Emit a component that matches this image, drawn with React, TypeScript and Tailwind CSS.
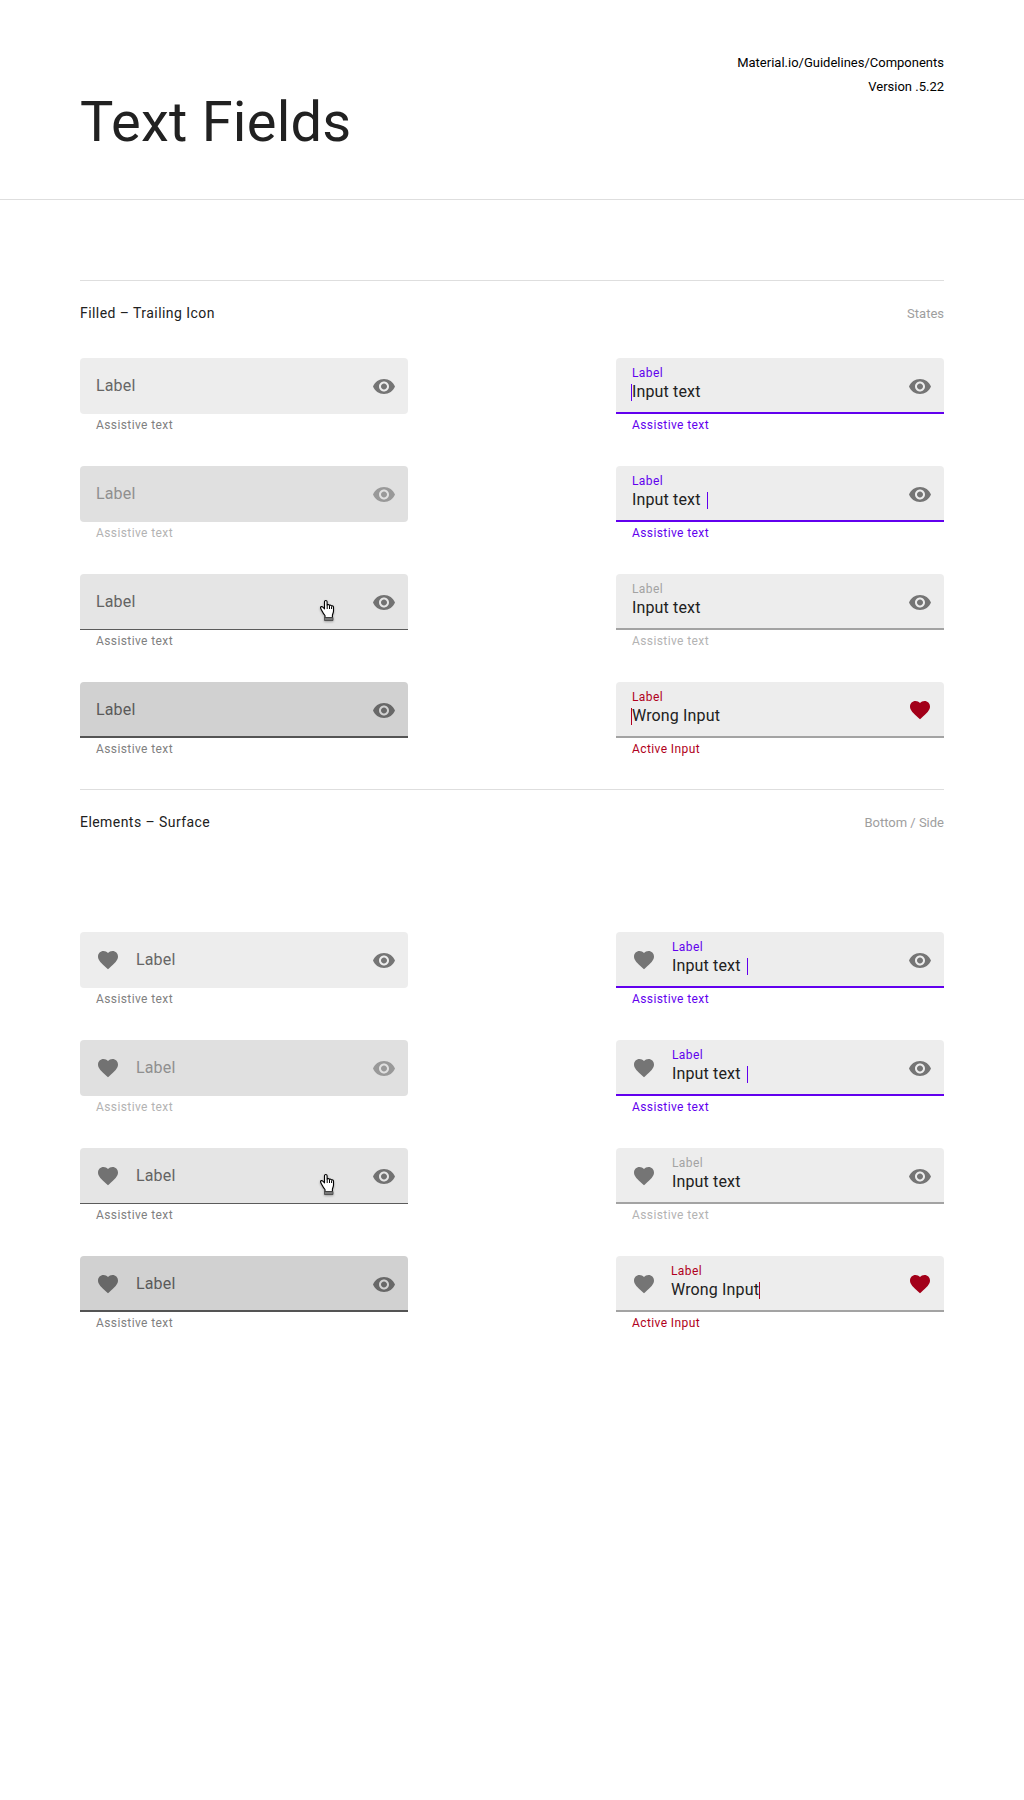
import React from "react";

type Tone = "default" | "disabled" | "hover" | "pressed";
type State = "focused" | "resting" | "error";

function Eye({ className = "" }: { className?: string }) {
  return (
    <svg viewBox="0 -0.5 24 24" className={`size-6 shrink-0 ${className}`} fill="currentColor">
      <path d="M12 4.5C7 4.5 2.73 7.61 1 12c1.73 4.39 6 7.5 11 7.5s9.27-3.11 11-7.5c-1.73-4.39-6-7.5-11-7.5zM12 17c-2.76 0-5-2.24-5-5s2.24-5 5-5 5 2.24 5 5-2.24 5-5 5zm0-8c-1.66 0-3 1.34-3 3s1.34 3 3 3 3-1.34 3-3-1.34-3-3-3z" />
    </svg>
  );
}

function Heart({ className = "" }: { className?: string }) {
  return (
    <svg viewBox="0 0 24 24" className={`size-6 shrink-0 ${className}`} fill="currentColor">
      <path d="M12 21.35l-1.45-1.32C5.4 15.36 2 12.28 2 8.5 2 5.42 4.42 3 7.5 3c1.74 0 3.41.81 4.5 2.09C13.09 3.81 14.76 3 16.5 3 19.58 3 22 5.42 22 8.5c0 3.78-3.4 6.86-8.55 11.54L12 21.35z" />
    </svg>
  );
}

function HandCursor() {
  return (
    <svg viewBox="0 0 16 23" className="absolute left-[239px] top-[25px] h-[23px] w-4 drop-shadow-[0_1px_1px_rgba(0,0,0,0.3)]">
      <path
        d="M6 18.500v-2C5 15.300 3.800 13.500 3.200 12.200 2.500 10.800 1.500 9.800 1.500 8.600c0-1.200 1.500-1.300 2.400-.4l1.600 1.600V2.700c0-1.600 2.500-1.600 2.600 0V6c.5-.7 2.100-.5 2.400.4.6-.5 1.800-.3 2.100.6.800-.3 1.900.1 1.900 1.300V12c0 1.800-.8 2.600-1.100 4.200v2.300z"
        fill="#fff"
        stroke="#000"
        strokeWidth="1.1"
        strokeLinejoin="round"
      />
      <path d="M8.200 6v4M10.500 6.700v3.300M12.600 7.500v2.500" stroke="#000" strokeWidth="1" />
      <path d="M5.500 18.500h8.500v3H5.500z" fill="#777" stroke="#444" strokeWidth=".8" strokeLinejoin="round" />
    </svg>
  );
}

const tones: Record<Tone, { box: string; label: string; eye: string; helper: string }> = {
  default: { box: "rounded bg-[#ededed]", label: "text-[#666]", eye: "text-[#757575]", helper: "text-[#808080]" },
  disabled: { box: "rounded bg-[#e0e0e0]", label: "text-[#8f8f8f]", eye: "text-[#999]", helper: "text-[#b3b3b3]" },
  hover: { box: "rounded-t border-b border-[#5b5b5b] bg-[#e5e5e5]", label: "text-[#636363]", eye: "text-[#727272]", helper: "text-[#808080]" },
  pressed: { box: "rounded-t border-b-2 border-[#545454] bg-[#d1d1d1]", label: "text-[#5a5a5a]", eye: "text-[#686868]", helper: "text-[#808080]" },
};

const states: Record<State, { line: string; label: string; helper: string; caret: string }> = {
  focused: { line: "border-[#6200ee]", label: "text-[#6200ee]", helper: "text-[#6200ee]", caret: "bg-[#6200ee]" },
  resting: { line: "border-[#a3a3a3]", label: "text-[#a3a3a3]", helper: "text-[#b3b3b3]", caret: "" },
  error: { line: "border-[#a3a3a3]", label: "text-[#b00020]", helper: "text-[#b00020]", caret: "bg-[#b00020]" },
};

function Helper({ text, className }: { text: string; className: string }) {
  return <p className={`pl-4 pt-[3px] text-xs leading-4 tracking-[0.4px] ${className}`}>{text}</p>;
}

function EmptyField({ tone, leading }: { tone: Tone; leading: boolean }) {
  const t = tones[tone];
  const heart = tone === "pressed" ? "text-[#686868]" : "text-[#727272]";
  return (
    <div className="h-[76px] w-[328px]">
      <div className={`relative flex h-14 items-start px-3 pt-4 ${t.box}`}>
        {leading && <Heart className={`ml-1 mr-3 ${heart}`} />}
        <span className={`ml-1 grow text-base leading-6 tracking-[0.15px] ${t.label}`}>Label</span>
        <Eye className={t.eye} />
        {tone === "hover" && <HandCursor />}
      </div>
      <Helper text="Assistive text" className={t.helper} />
    </div>
  );
}

type InputProps = { state: State; text: string; helper: string; leading: boolean; caret?: string; inset?: string };

function InputField({ state, text, helper, leading, caret, inset = "ml-1" }: InputProps) {
  const s = states[state];
  return (
    <div className="h-[76px] w-[328px]">
      <div className={`relative flex h-14 items-start rounded-t border-b-2 bg-[#ededed] px-3 pt-4 ${s.line}`}>
        {leading && <Heart className="ml-1 mr-3 text-[#757575]" />}
        <div className={`-mt-[9px] grow ${inset}`}>
          <p className={`text-xs leading-4 tracking-[0.4px] ${s.label}`}>Label</p>
          <p className="text-base leading-[22px] tracking-[0.15px] text-[#212121]">{text}</p>
        </div>
        {state === "error" ? <Heart className="text-[#a30019]" /> : <Eye className="text-[#757575]" />}
        {caret && <span className={`absolute top-[26px] h-[17px] w-px ${caret} ${s.caret}`} />}
      </div>
      <Helper text={helper} className={s.helper} />
    </div>
  );
}

function Fields({ leading }: { leading: boolean }) {
  const empty: Tone[] = ["default", "disabled", "hover", "pressed"];
  return (
    <div className="flex justify-between">
      <div className="flex flex-col gap-8">
        {empty.map((tone) => (
          <EmptyField key={tone} tone={tone} leading={leading} />
        ))}
      </div>
      <div className="flex flex-col gap-8">
        <InputField state="focused" text="Input text" helper="Assistive text" leading={leading} caret={leading ? "left-[131px]" : "left-[15px]"} />
        <InputField state="focused" text="Input text" helper="Assistive text" leading={leading} caret={leading ? "left-[131px]" : "left-[91px]"} />
        <InputField state="resting" text="Input text" helper="Assistive text" leading={leading} />
        <InputField
          state="error"
          text="Wrong Input"
          helper="Active Input"
          leading={leading}
          caret={leading ? "left-[143px]" : "left-[15px]"}
          inset={leading ? "ml-[3px]" : "ml-1"}
        />
      </div>
    </div>
  );
}

function SectionHeader({ title, note }: { title: string; note: string }) {
  return (
    <div className="flex items-baseline justify-between border-t border-[#dedede] pt-5">
      <h2 className="text-sm leading-6 tracking-[0.44px] text-[#212121]">{title}</h2>
      <span className="text-[13px] leading-6 text-[#9e9e9e]">{note}</span>
    </div>
  );
}

export default function App() {
  return (
    <div className="min-h-[1800px] w-[1024px] bg-white font-['Roboto',sans-serif]">
      <header className="flex h-[200px] items-start justify-between border-b border-[#dedede] px-20 pt-[51px]">
        <h1 className="pt-[39px] text-[56px] leading-[64px] tracking-[0.25px] text-[#212121]">Text Fields</h1>
        <div className="text-right text-[13px] leading-6 text-black">
          <p>Material.io/Guidelines/Components</p>
          <p>Version .5.22</p>
        </div>
      </header>
      <main className="px-20 pt-20">
        <section className="h-[509px]">
          <SectionHeader title="Filled – Trailing Icon" note="States" />
          <div className="pt-8">
            <Fields leading={false} />
          </div>
        </section>
        <section>
          <SectionHeader title="Elements – Surface" note="Bottom / Side" />
          <div className="pt-[97px]">
            <Fields leading />
          </div>
        </section>
      </main>
    </div>
  );
}
